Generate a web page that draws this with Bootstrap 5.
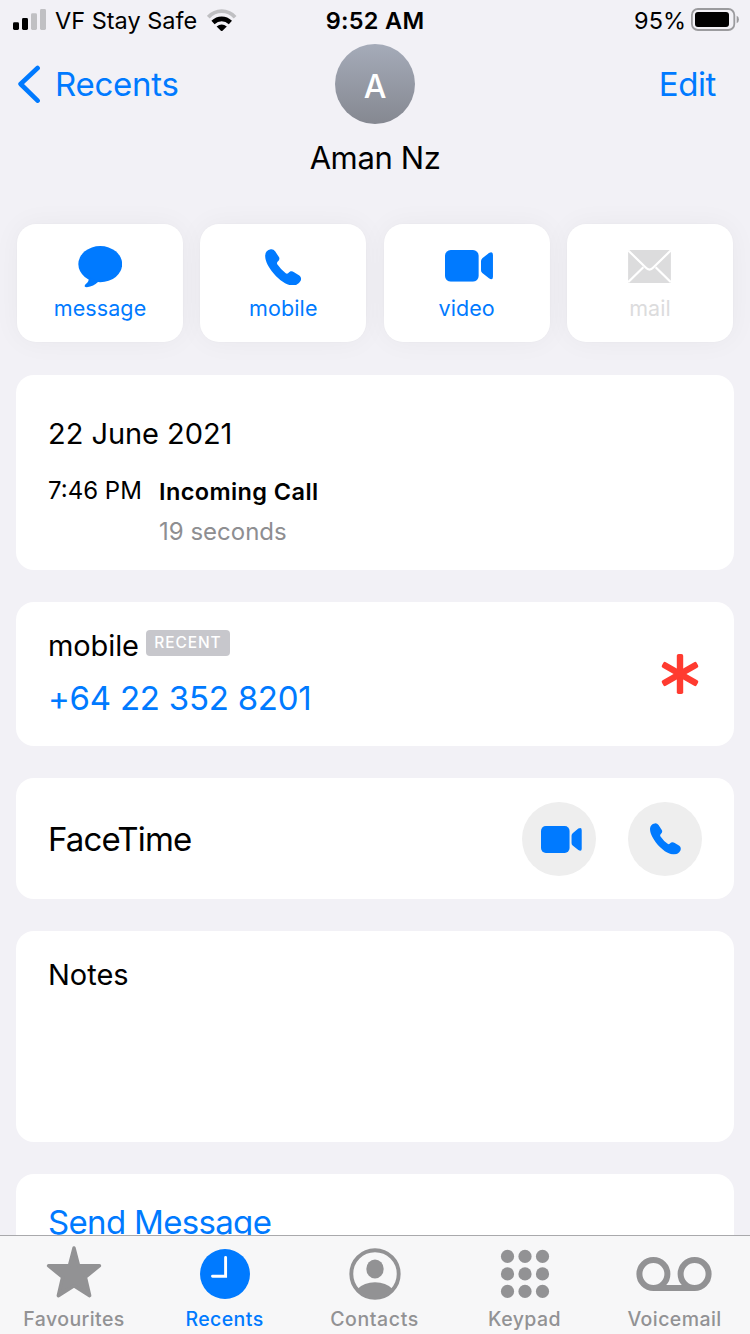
<!DOCTYPE html>
<html lang="en">
<head>
<meta charset="utf-8">
<meta name="viewport" content="width=device-width, initial-scale=1">
<title>Aman Nz</title>
<link href="https://cdn.jsdelivr.net/npm/bootstrap@5.3.0/dist/css/bootstrap.min.css" rel="stylesheet">
<style>
  :root { --ios-blue: #007aff; --ios-bg: #f2f1f6; --ios-gray: #929294; }
  body { background: var(--ios-bg); color: #000; font-family: Inter, "Liberation Sans", sans-serif; height: 1334px; overflow: hidden; }
  svg { display: block; flex: none; }
  a, .blue { color: var(--ios-blue); text-decoration: none; }
  .screen { height: 1334px; overflow: hidden; }

  .status { height: 44px; line-height: 41px; font-size: 23.5px; padding: 0 11px 0 13px; }
  .status > div { flex: 1 1 0; white-space: nowrap; }
  .status .clock { font-weight: 600; letter-spacing: .3px; margin: 0 1px 0 -1px; }
  .topbar { height: 80px; line-height: 81px; font-size: 33px; padding: 0 34px 0 18px; }
  .topbar > * { flex: 1 1 0; }
  .topbar .avatar { flex: none; width: 80px; height: 80px; margin: 0 -8px 0 8px; background: linear-gradient(#a5abb9, #858891); color: #fff; font-size: 32px; font-weight: 500; line-height: 86px; }
  .person { font-size: 31px; font-weight: 400; line-height: 68px; letter-spacing: -.39px; margin-bottom: 32px; }

  .actions { display: grid; grid-template-columns: repeat(4, 1fr); gap: 17.33px; padding: 0 17px; margin-bottom: 33px; }
  .action { height: 118px; padding-top: 22px; border-radius: 19px; background: #fff; font-size: 21.5px; line-height: 40px; color: var(--ios-blue); letter-spacing: .1px; box-shadow: 0 0 28px rgba(0, 0, 0, .045), 0 0 2px rgba(0, 0, 0, .03); }
  .action.off { color: #dcdcdd; }
  .action .glyph { height: 42px; }
  .action .raised { margin-bottom: 1.5px; }

  .groups { padding: 0 16px; gap: 32px; }
  .panel { flex: none; background: #fff; border-radius: 18px; padding: 0 32px; line-height: 40px; }
  .t-lg { font-size: 33px; }
  .t-md { font-size: 29px; }
  .t-sm { font-size: 24px; }
  .recent-tag { width: 84px; height: 26px; margin: 4px 0 0 7px; border-radius: 4px; background: #c7c7cc; color: #fff; font-size: 15.5px; font-weight: 500; line-height: 26px; letter-spacing: .9px; }
  .round { width: 74px; height: 74px; background: #eee; color: var(--ios-blue); }

  .tabs { height: 99px; padding-top: 8px; background: #f7f7f8; border-top: 1px solid #a9a9ac; color: var(--ios-gray); font-size: 19.5px; font-weight: 500; line-height: 30px; letter-spacing: .42px; }
  .tabs .tab-item { width: 20%; }
  .tabs .tab-item span { margin-right: 1px; }
  .tabs .active { color: var(--ios-blue); }
</style>
<script src="https://cdn.jsdelivr.net/npm/bootstrap@5.3.0/dist/js/bootstrap.bundle.min.js"></script>
</head>
<body>
<svg width="0" height="0" class="position-absolute" aria-hidden="true">
  <symbol id="phone" viewBox="795 115 109 110">
    <path fill="currentColor" d="M812 116Q820 115 825 122L837 140Q840 147 833 153Q829 157 832 162Q843 178 857 188Q861 191 865 187C870 181 876 181 882 185L898 195Q906 201 902 211Q895 225 878 225C860 225 835 208 815 182C800 161 795 147 795 135Q796 118 812 116Z"/>
  </symbol>
  <symbol id="video" viewBox="210 121 145 95">
    <rect x="210" y="121" width="101" height="95" rx="17" fill="currentColor"/>
    <path fill="currentColor" d="M318 155Q318 150 322 146L342 130Q354 123 354 136V201Q354 213 342 206L322 190Q318 187 318 181Z"/>
  </symbol>
</svg>

<div class="screen">
  <div class="status d-flex">
    <div class="d-flex">
      <svg width="34" height="40" viewBox="0 0 34 40">
        <rect x="0" y="22.3" width="6" height="7.7" rx="1.4"/><rect x="9" y="18" width="6" height="12" rx="1.4"/>
        <g fill="#c0c0c3"><rect x="18" y="13.2" width="6" height="16.8" rx="1.4"/><rect x="27" y="9" width="6" height="21" rx="1.4"/></g>
      </svg>
      <span class="ms-2">VF Stay Safe</span>
      <svg width="30" height="40" viewBox="0 0 30 40" style="margin-left:10px">
        <g fill="none"><path stroke="#bfbfc2" stroke-width="3.8" d="M1.3 17.2Q7 11.2 14.7 11.2T28.1 17.2"/>
        <path stroke="#000" stroke-width="4.6" d="M6 22.5Q9.8 18.9 14.7 18.9T23.4 22.5"/></g>
        <path d="M9.6 26.5Q14.7 22.3 19.8 26.5L15.5 30.7Q14.7 31.4 13.9 30.7Z"/>
      </svg>
    </div>
    <div class="clock text-center">9:52 AM</div>
    <div class="d-flex justify-content-end">
      <span>95%</span>
      <svg width="49" height="40" viewBox="0 0 49 40" style="margin-left:4px">
        <rect x="1.9" y="9" width="42.4" height="21" rx="6" fill="none" stroke="#9b9b9e" stroke-width="1.8"/>
        <rect x="5" y="12" width="34" height="15" rx="3"/>
        <path fill="#9b9b9e" d="M46.7 15.8Q48.9 16.5 48.9 19.5T46.7 23.2Z"/>
      </svg>
    </div>
  </div>

  <nav class="topbar d-flex">
    <a href="#" class="d-flex align-items-center">
      <svg width="22" height="38" viewBox="0 0 22 38"><path d="M19.6 3L2.6 19L19.6 35.6" fill="none" stroke="currentColor" stroke-width="4.6" stroke-linecap="round" stroke-linejoin="round"/></svg>
      <span style="margin-left:15px;letter-spacing:-.25px">Recents</span>
    </a>
    <div class="avatar rounded-circle text-center">A</div>
    <a href="#" class="text-end" style="letter-spacing:-.4px">Edit</a>
  </nav>
  <h1 class="person text-center">Aman Nz</h1>

  <div class="actions text-center">
    <div class="action">
      <div class="glyph d-flex justify-content-center align-items-center">
        <svg width="44.5" height="41.5" viewBox="234 107 132 125"><g fill="currentColor"><ellipse cx="300" cy="161.5" rx="66" ry="54.5"/><path d="M264 201Q269 212 255 223Q249 231 260 231Q279 229 296 213Z"/></g></svg>
      </div>message
    </div>
    <div class="action">
      <div class="glyph d-flex justify-content-center align-items-center"><svg width="36.5" height="36.5"><use href="#phone"/></svg></div>mobile
    </div>
    <div class="action">
      <div class="glyph d-flex justify-content-center align-items-center"><svg width="48.3" height="31.7" class="ms-1 raised"><use href="#video"/></svg></div>video
    </div>
    <div class="action off">
      <div class="glyph d-flex justify-content-center align-items-center">
        <svg width="43" height="33.5" class="raised" viewBox="759 118 129 101"><rect x="759" y="118" width="129" height="101" rx="3" fill="currentColor"/><path d="M759 119L812 171Q823.5 183 835 171L888 119M759 215L805 170M888 215L842 170" fill="none" stroke="#fff" stroke-width="6.5"/></svg>
      </div>mail
    </div>
  </div>

  <main class="groups d-flex flex-column">
    <section class="panel" style="height:195px;padding-top:39px">
      <div class="t-md" style="letter-spacing:-.05px">22 June 2021</div>
      <div class="d-flex t-sm" style="margin-top:17px">
        <div style="width:111px">7:46 PM</div>
        <div style="padding-top:1px">
          <div style="font-size:23.5px;font-weight:600;letter-spacing:.4px">Incoming Call</div>
          <div style="color:#8e8e91">19 seconds</div>
        </div>
      </div>
    </section>

    <section class="panel d-flex justify-content-between" style="height:144px;padding-top:24px">
      <div>
        <div class="d-flex t-md"><span style="letter-spacing:-.1px">mobile</span><span class="recent-tag text-center">RECENT</span></div>
        <div class="t-lg blue" style="margin-top:12px;letter-spacing:-.24px">+64 22 352 8201</div>
      </div>
      <svg width="44" height="44" viewBox="-22 -22 44 44" style="margin-top:26px"><g fill="#ff3b30"><rect id="arm" x="-3.2" y="-20" width="6.4" height="40" rx="1.8"/><use href="#arm" transform="rotate(60)"/><use href="#arm" transform="rotate(-60)"/></g></svg>
    </section>

    <section class="panel d-flex align-items-center" style="height:121px">
      <div class="t-lg me-auto" style="letter-spacing:-.85px">FaceTime</div>
      <div class="round rounded-circle d-flex align-items-center justify-content-center"><svg width="41" height="27" style="margin:1px 0 0 4px"><use href="#video"/></svg></div>
      <div class="round rounded-circle d-flex align-items-center justify-content-center" style="margin-left:32px"><svg width="31" height="31.5" style="margin-top:1px"><use href="#phone"/></svg></div>
    </section>

    <section class="panel" style="height:211px;padding-top:24px">
      <div class="t-md">Notes</div>
    </section>

    <section class="panel" style="height:120px;padding-top:28px">
      <a href="#" class="t-lg d-block" style="letter-spacing:-.67px">Send Message</a>
    </section>
  </main>
</div>

<nav class="tabs fixed-bottom d-flex text-center">
  <div class="tab-item d-flex flex-column align-items-center">
    <svg width="80" height="60" viewBox="0 0 80 60"><path d="M39 4L43.6 21.7H64.5L50.4 33.2L54.7 51.7L39 41.7L23.3 51.7L27.6 33.2L13.5 21.7H34.4Z" fill="currentColor" stroke="currentColor" stroke-width="3.4" stroke-linejoin="round"/></svg>
    <span style="margin-right:2px">Favourites</span>
  </div>
  <div class="tab-item active d-flex flex-column align-items-center">
    <svg width="80" height="60" viewBox="0 0 80 60"><circle cx="40" cy="30" r="25" fill="currentColor"/><path d="M40.6 13.5V32.3H27.5" fill="none" stroke="#fff" stroke-width="2.9" stroke-linecap="round"/></svg>
    <span>Recents</span>
  </div>
  <div class="tab-item d-flex flex-column align-items-center">
    <svg width="80" height="60" viewBox="0 0 80 60"><circle cx="40" cy="30" r="23.7" fill="none" stroke="currentColor" stroke-width="3.9"/><ellipse cx="40" cy="25" rx="8.7" ry="9.4" fill="currentColor"/><path d="M22.5 45Q29 38.3 40 38.3T57.5 45Q50 54.5 40 54.5T22.5 45Z" fill="currentColor"/></svg>
    <span style="letter-spacing:.6px">Contacts</span>
  </div>
  <div class="tab-item d-flex flex-column align-items-center">
    <svg width="80" height="60" viewBox="0 0 80 60"><g fill="currentColor"><circle cx="22.5" cy="12.4" r="6.6"/><circle cx="40" cy="12.4" r="6.6"/><circle cx="57.5" cy="12.4" r="6.6"/><circle cx="22.5" cy="29.9" r="6.6"/><circle cx="40" cy="29.9" r="6.6"/><circle cx="57.5" cy="29.9" r="6.6"/><circle cx="22.5" cy="47.4" r="6.6"/><circle cx="40" cy="47.4" r="6.6"/><circle cx="57.5" cy="47.4" r="6.6"/></g></svg>
    <span>Keypad</span>
  </div>
  <div class="tab-item d-flex flex-column align-items-center">
    <svg width="80" height="60" viewBox="0 0 80 60"><g fill="none" stroke="currentColor" stroke-width="6"><circle cx="18.4" cy="30" r="14"/><circle cx="59.6" cy="30" r="14"/><path d="M18.4 44H59.6"/></g></svg>
    <span>Voicemail</span>
  </div>
</nav>
</body>
</html>
